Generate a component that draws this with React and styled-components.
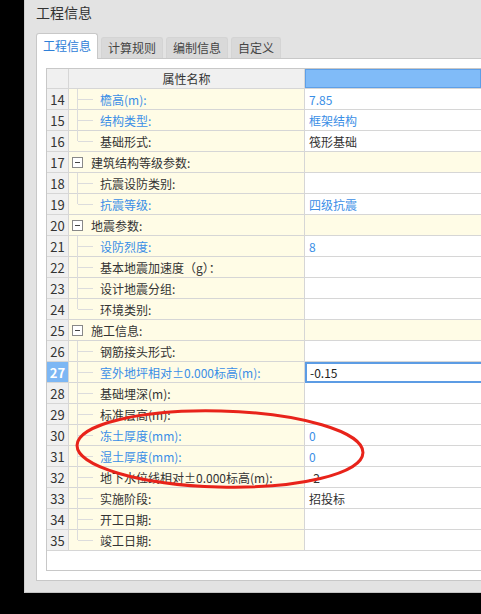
import React from 'react';
import styled, { createGlobalStyle } from 'styled-components';

const GlobalStyle = createGlobalStyle`
    html, body {
        margin: 0;
        padding: 0;
        background: #000;
        overflow: hidden;
    }
    body {
        font-family: "Noto Sans CJK SC", "Microsoft YaHei", sans-serif;
        font-size: 12px;
        color: #333;
    }
`;

const BLUE = '#3a8ee6';
const LINE = '#d6d6d6';
const GUIDE = '#dcdcdc';
const YELLOW = '#fffce6';

// window frame
const Window = styled.div`
    position: relative;
    margin-left: 24px;
    width: 457px;
    height: 593px;
    box-sizing: border-box;
    background: #e3e3e3;
    border-left: 1px solid #cfcfcf;
    border-bottom: 1px solid #c4c4c4;
    padding-left: 11px;
    overflow: hidden;
`;

const Title = styled.div`
    height: 33px;
    line-height: 25px;
    font-size: 14px;
    color: #333;
`;

const TabBar = styled.div`
    display: flex;
    align-items: flex-end;
    gap: 3px;
    height: 25px;
`;

const Tab = styled.div`
    box-sizing: border-box;
    height: ${(p) => (p.$active ? '26px' : '21px')};
    margin-bottom: ${(p) => (p.$active ? '-1px' : '0')};
    padding: 0 6px;
    line-height: ${(p) => (p.$active ? '24px' : '20px')};
    font-size: 12px;
    color: ${(p) => (p.$active ? '#2f80d8' : '#444')};
    background: ${(p) => (p.$active ? '#fff' : '#d9d9d9')};
    border: 1px solid ${(p) => (p.$active ? '#c8c8c8' : '#d4d4d4')};
    border-bottom: none;
    border-radius: 3px 3px 0 0;
    position: relative;
    z-index: 1;
`;

const Panel = styled.div`
    box-sizing: border-box;
    height: 523px;
    background: #fff;
    border: 1px solid #c8c8c8;
    border-right: none;
    padding: 9px 0 0 9px;
`;

// property grid
const Grid = styled.div`
    box-sizing: border-box;
    height: 503px;
    border: 1px solid #c8c8c8;
    border-right: none;
    display: flex;
    flex-direction: column;
`;

const Row = styled.div`
    display: grid;
    grid-template-columns: 22px 236px 1fr;
    height: ${(p) => (p.$header ? '20px' : '21px')};
    box-sizing: border-box;
    border-bottom: 1px solid ${LINE};
`;

const NumCell = styled.div`
    box-sizing: border-box;
    border-right: 1px solid ${LINE};
    background: ${(p) => (p.$selected ? '#7db7f4' : '#f0f0f0')};
    color: ${(p) => (p.$selected ? '#fff' : '#333')};
    font-weight: ${(p) => (p.$selected ? 700 : 400)};
    font-size: 13px;
    display: flex;
    align-items: center;
    justify-content: center;
`;

const HeadCell = styled.div`
    box-sizing: border-box;
    background: ${(p) => (p.$accent ? '#80bbf8' : '#f0f0f0')};
    border-right: 1px solid ${LINE};
    outline: ${(p) => (p.$accent ? '1px solid #5d9fe8' : 'none')};
    outline-offset: -1px;
    display: flex;
    align-items: center;
    justify-content: center;
    color: #333;
`;

const NameCell = styled.div`
    box-sizing: border-box;
    border-right: 1px solid ${LINE};
    background: ${YELLOW};
    display: flex;
    align-items: center;
    color: ${(p) => (p.$blue ? BLUE : '#333')};
    white-space: nowrap;
`;

const ValueCell = styled.div`
    box-sizing: border-box;
    background: ${(p) => (p.$group ? YELLOW : '#fff')};
    padding-left: 4px;
    display: flex;
    align-items: center;
    color: ${(p) => (p.$blue ? BLUE : '#333')};
    white-space: nowrap;
`;

const EditBox = styled.div`
    box-sizing: border-box;
    height: calc(100% + 1px);
    margin: 0 0 -1px -4px;
    width: calc(100% + 4px);
    border: 2px solid #5c9ce4;
    border-right: none;
    padding-left: 3px;
    display: flex;
    align-items: center;
    color: #222;
`;

const Guide = styled.span`
    position: relative;
    align-self: stretch;
    width: 31px;
    flex: none;
    &::before {
        content: '';
        position: absolute;
        left: 8px;
        top: 0;
        height: ${(p) => (p.$last ? '50%' : 'calc(100% + 1px)')};
        border-left: 1px solid ${GUIDE};
    }
    &::after {
        content: '';
        position: absolute;
        left: 9px;
        top: 50%;
        width: 15px;
        border-top: 1px solid ${GUIDE};
    }
`;

const Toggle = styled.span`
    box-sizing: border-box;
    width: 11px;
    height: 11px;
    margin: 0 8px 0 3px;
    border: 1px solid #888;
    background: #fff;
    position: relative;
    flex: none;
    &::after {
        content: '';
        position: absolute;
        left: 2px;
        right: 2px;
        top: 4px;
        border-top: 1px solid #444;
    }
`;

const Filler = styled.div`
    flex: 1;
`;

const Mark = styled.svg`
    position: absolute;
    left: 0;
    top: 0;
    pointer-events: none;
    z-index: 5;
`;

const rows = [
    { n: 14, name: '檐高(m):', value: '7.85', blue: true },
    { n: 15, name: '结构类型:', value: '框架结构', blue: true },
    { n: 16, name: '基础形式:', value: '筏形基础', last: true },
    { n: 17, name: '建筑结构等级参数:', group: true },
    { n: 18, name: '抗震设防类别:' },
    { n: 19, name: '抗震等级:', value: '四级抗震', blue: true, last: true },
    { n: 20, name: '地震参数:', group: true },
    { n: 21, name: '设防烈度:', value: '8', blue: true },
    { n: 22, name: '基本地震加速度（g）：' },
    { n: 23, name: '设计地震分组:' },
    { n: 24, name: '环境类别:', last: true },
    { n: 25, name: '施工信息:', group: true },
    { n: 26, name: '钢筋接头形式:' },
    { n: 27, name: '室外地坪相对±0.000标高(m):', value: '-0.15', blue: true, selected: true },
    { n: 28, name: '基础埋深(m):' },
    { n: 29, name: '标准层高(m):' },
    { n: 30, name: '冻土厚度(mm):', value: '0', blue: true },
    { n: 31, name: '湿土厚度(mm):', value: '0', blue: true },
    { n: 32, name: '地下水位线相对±0.000标高(m):', value: '-2' },
    { n: 33, name: '实施阶段:', value: '招投标' },
    { n: 34, name: '开工日期:' },
    { n: 35, name: '竣工日期:', last: true },
];

const tabs = ['工程信息', '计算规则', '编制信息', '自定义'];

export default function App() {
    return (
        <>
            <GlobalStyle />
            <Window>
                <Title>工程信息</Title>
                <TabBar>
                    {tabs.map((t, i) => (
                        <Tab key={t} $active={i === 0}>{t}</Tab>
                    ))}
                </TabBar>
                <Panel>
                    <Grid>
                        <Row $header>
                            <HeadCell />
                            <HeadCell>属性名称</HeadCell>
                            <HeadCell $accent />
                        </Row>
                        {rows.map((r) => (
                            <Row key={r.n}>
                                <NumCell $selected={r.selected}>{r.n}</NumCell>
                                <NameCell $blue={r.blue}>
                                    {r.group ? <Toggle /> : <Guide $last={r.last} />}
                                    {r.name}
                                </NameCell>
                                <ValueCell $group={r.group} $blue={r.blue}>
                                    {r.selected ? <EditBox>{r.value}</EditBox> : r.value}
                                </ValueCell>
                            </Row>
                        ))}
                        <Filler />
                    </Grid>
                </Panel>
                {/* red hand-drawn mark */}
                <Mark width="420" height="593">
                    <ellipse
                        cx="195"
                        cy="449"
                        rx="143"
                        ry="38"
                        fill="none"
                        stroke="#e8231a"
                        strokeWidth="3"
                        transform="rotate(1.5 195 449)"
                    />
                </Mark>
            </Window>
        </>
    );
}
